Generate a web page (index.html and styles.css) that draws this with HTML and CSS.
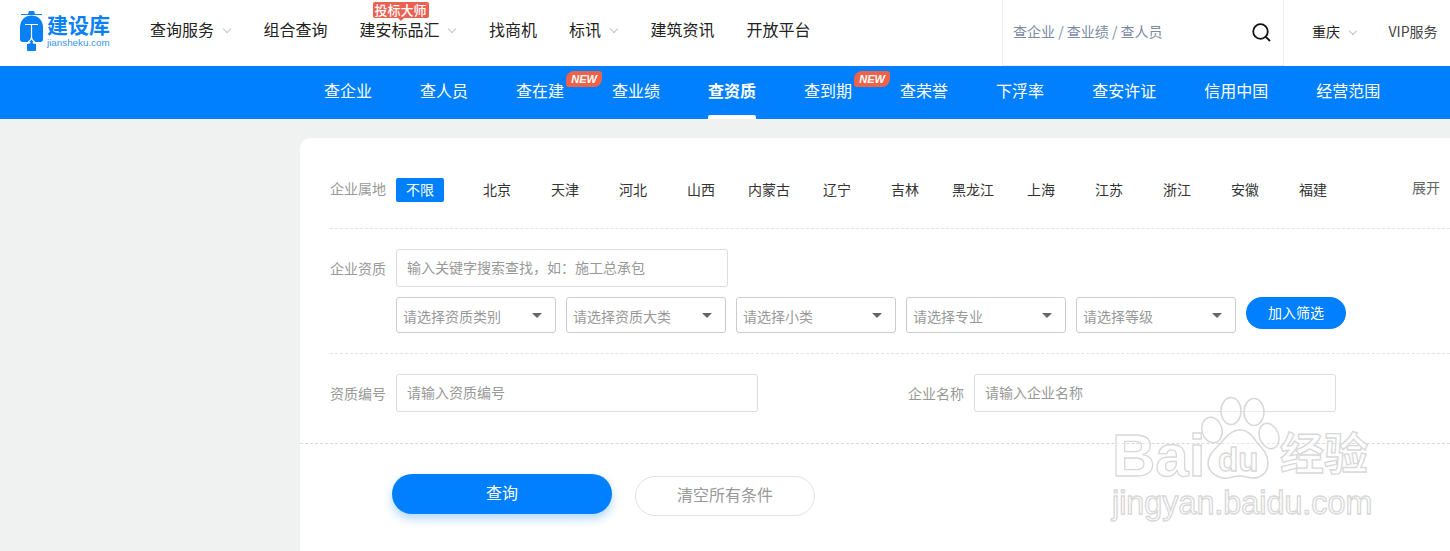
FILE: index.html
```html
<!DOCTYPE html>
<html lang="zh">
<head>
<meta charset="utf-8">
<title>建设库</title>
<link rel="stylesheet" href="styles.css">
</head>
<body>
<header class="topbar">
  <a class="logo">
    <svg class="logo-mark" width="28" height="42" viewBox="0 0 28 42">
      <path class="logo-fill" d="M10 1h5l1 3h-7z"/>
      <path class="logo-line" d="M2 4.500h21"/>
      <path class="logo-fill" d="M12.500 5.500c6.500 0 11 4.500 11.500 11v13c0 1.500-1 2.500-2.500 2.500h-18c-1.500 0-2.500-1-2.500-2.500v-13c.5-6.500 5-11 11.500-11z"/>
      <path class="logo-cut" d="M6 14.500h13M12.500 14.500v12c0 2.500-1.500 4.500-3.500 5.500M12.500 26.500c0 2.500 1.500 4.500 3.500 5.500"/>
      <path class="logo-fill" d="M11.500 32h2l.5 1.500 3 .5v6c0 .7-.5 1-1 1h-7c-.5 0-1-.3-1-1v-6l3-.5z"/>
    </svg>
    <span class="logo-text">
      <span class="logo-name">建设库</span>
      <span class="logo-url">jiansheku.com</span>
    </span>
  </a>
  <nav class="mainnav">
    <a class="mainnav-item">查询服务<i class="chev"></i></a>
    <a class="mainnav-item">组合查询</a>
    <a class="mainnav-item has-tip">建安标品汇<i class="chev"></i><span class="tip">投标大师</span></a>
    <a class="mainnav-item">找商机</a>
    <a class="mainnav-item">标讯<i class="chev"></i></a>
    <a class="mainnav-item">建筑资讯</a>
    <a class="mainnav-item">开放平台</a>
  </nav>
  <div class="topsearch">
    <span class="topsearch-hint">查企业 / 查业绩 / 查人员</span>
    <svg class="topsearch-icon" width="20" height="20" viewBox="0 0 20 20">
      <circle cx="9.500" cy="9.500" r="7.300"/>
      <path d="M14.800 14.800l3.700 3.700"/>
    </svg>
  </div>
  <a class="city">重庆<i class="chev"></i></a>
  <a class="vip">VIP服务</a>
</header>

<nav class="subnav">
  <a class="subnav-item">查企业</a>
  <a class="subnav-item">查人员</a>
  <a class="subnav-item">查在建<span class="new">NEW</span></a>
  <a class="subnav-item">查业绩</a>
  <a class="subnav-item is-active">查资质</a>
  <a class="subnav-item">查到期<span class="new">NEW</span></a>
  <a class="subnav-item">查荣誉</a>
  <a class="subnav-item">下浮率</a>
  <a class="subnav-item">查安许证</a>
  <a class="subnav-item">信用中国</a>
  <a class="subnav-item">经营范围</a>
</nav>

<main class="card">
  <section class="row row-region">
    <span class="label">企业属地</span>
    <a class="chip is-on">不限</a>
    <div class="chips">
      <a class="chip">北京</a>
      <a class="chip">天津</a>
      <a class="chip">河北</a>
      <a class="chip">山西</a>
      <a class="chip">内蒙古</a>
      <a class="chip">辽宁</a>
      <a class="chip">吉林</a>
      <a class="chip">黑龙江</a>
      <a class="chip">上海</a>
      <a class="chip">江苏</a>
      <a class="chip">浙江</a>
      <a class="chip">安徽</a>
      <a class="chip">福建</a>
    </div>
    <a class="expand">展开</a>
  </section>

  <section class="row row-qual">
    <span class="label label-input">企业资质</span>
    <div class="qual-body">
      <div class="field field-key">输入关键字搜索查找，如：施工总承包</div>
      <div class="selects">
        <div class="select">请选择资质类别<i class="caret"></i></div>
        <div class="select">请选择资质大类<i class="caret"></i></div>
        <div class="select">请选择小类<i class="caret"></i></div>
        <div class="select">请选择专业<i class="caret"></i></div>
        <div class="select">请选择等级<i class="caret"></i></div>
        <a class="add-btn">加入筛选</a>
      </div>
    </div>
  </section>

  <section class="row row-code">
    <span class="label label-input">资质编号</span>
    <div class="field field-wide">请输入资质编号</div>
    <span class="label label-input label-name">企业名称</span>
    <div class="field field-wide">请输入企业名称</div>
  </section>

  <footer class="actions">
    <a class="btn-query">查询</a>
    <a class="btn-clear">清空所有条件</a>
  </footer>
</main>

<div class="watermark">
  <svg class="wm-paw" width="132" height="92" viewBox="0 0 132 92">
    <ellipse cx="50" cy="17" rx="10" ry="13.500"/>
    <ellipse cx="73" cy="18" rx="10" ry="13.500"/>
    <ellipse cx="31" cy="36" rx="10" ry="13" transform="rotate(-15 31 36)"/>
    <ellipse cx="88" cy="42" rx="9.500" ry="13" transform="rotate(-20 88 42)"/>
    <path d="M59 36c9 0 13 7 18 14 6 6 10 11 10 19 0 10-8 16-17 15-5-1-7-2-11-2s-7 1-12 2c-9 1-20-5-20-15 0-8 6-13 12-19 6-7 11-14 20-14z"/>
  </svg>
  <span class="wm-bai">Bai</span>
  <span class="wm-du">du</span>
  <span class="wm-cn">经验</span>
  <span class="wm-url">jingyan.baidu.com</span>
</div>
</body>
</html>
```
FILE: styles.css
```css
* { box-sizing: border-box; }

html, body {
  margin: 0;
  height: 551px;
  overflow: hidden;
}

body {
  position: relative;
  background: #f0f2f2;
  font-family: "Noto Sans CJK SC", "Noto Sans", sans-serif;
  color: #333;
}

/* top bar */
.topbar {
  height: 66px;
  background: #fff;
  display: flex;
  align-items: stretch;
}

.logo {
  width: 150px;
  padding: 10px 0 0 19px;
  display: flex;
  align-items: flex-start;
  flex: none;
}

.logo-mark { flex: none; }
.logo-fill { fill: #0a80f5; }
.logo-line { stroke: #0a80f5; stroke-width: 1; fill: none; }
.logo-cut { stroke: #fff; stroke-width: 1.200; fill: none; }

.logo-text {
  display: flex;
  flex-direction: column;
  gap: 2px;
  margin-top: 3px;
}

.logo-name {
  font-size: 21px;
  font-weight: 700;
  line-height: 22px;
  color: #0a80f5;
  white-space: nowrap;
}

.logo-url {
  font-family: "Liberation Sans", sans-serif;
  font-size: 9.800px;
  line-height: 11px;
  color: #3b95ee;
  white-space: nowrap;
}

.mainnav {
  display: flex;
  gap: 32px;
  width: 852px;
  flex: none;
}

.mainnav-item {
  position: relative;
  display: flex;
  align-items: center;
  height: 58px;
  font-size: 16px;
  color: #222;
  white-space: nowrap;
}

.chev {
  width: 6px;
  height: 6px;
  margin: -1px 2px 0 9.500px;
  border-right: 1px solid #c4c4c4;
  border-bottom: 1px solid #c4c4c4;
  transform: rotate(45deg);
  flex: none;
}

.tip {
  position: absolute;
  left: 13px;
  top: 2px;
  width: 56px;
  height: 16px;
  background: #ea6152;
  border-radius: 2px;
  color: #fff;
  font-size: 13px;
  font-weight: 500;
  line-height: 15px;
  text-align: center;
}

.tip::after {
  content: "";
  position: absolute;
  left: 25px;
  top: 16px;
  border: 3px solid transparent;
  border-top-color: #ea6152;
  border-bottom-width: 0;
}

.topsearch {
  width: 282px;
  flex: none;
  display: flex;
  align-items: center;
  justify-content: space-between;
  padding: 0 12px 2px 10px;
  border-left: 1px solid #eee;
  border-right: 1px solid #eee;
  border-bottom: 1px solid #eee;
}

.topsearch-hint {
  font-size: 14px;
  line-height: 20px;
  margin-top: -2px;
  color: #7b8aa5;
  white-space: nowrap;
}

.topsearch-icon { flex: none; }
.topsearch-icon circle,
.topsearch-icon path {
  fill: none;
  stroke: #111;
  stroke-width: 1.800;
  stroke-linecap: round;
}

.city {
  display: flex;
  align-items: center;
  height: 62px;
  margin-left: 28px;
  font-size: 14px;
  color: #222;
  white-space: nowrap;
}

.vip {
  display: flex;
  align-items: center;
  height: 62px;
  margin-left: 31px;
  font-size: 14px;
  color: #444;
  white-space: nowrap;
}

/* blue navigation */
.subnav {
  height: 53px;
  background: #0080ff;
  display: flex;
  gap: 48px;
  padding-left: 324px;
}

.subnav-item {
  position: relative;
  height: 53px;
  line-height: 48px;
  font-size: 16px;
  color: #fff;
  white-space: nowrap;
}

.subnav-item.is-active { font-weight: 700; }

.subnav-item.is-active::after {
  content: "";
  position: absolute;
  left: 0;
  right: 0;
  bottom: 0;
  height: 4px;
  background: #fff;
  border-radius: 2px 2px 0 0;
}

.new {
  position: absolute;
  left: 50px;
  top: 5px;
  width: 36px;
  height: 16px;
  background: #ee6249;
  border-radius: 8px 3px 8px 3px;
  font-family: "Liberation Sans", sans-serif;
  font-size: 11px;
  font-weight: 700;
  font-style: italic;
  line-height: 16px;
  text-align: center;
  color: #fff;
}

/* filter card */
.card {
  width: 1200px;
  height: 440px;
  margin: 19px 0 0 300px;
  background: #fff;
  border-radius: 10px 0 0 0;
}

.row {
  margin-left: 30px;
  display: flex;
  border-bottom: 1px dashed #e4e4e4;
}

.label {
  flex: none;
  width: 66px;
  font-size: 14px;
  line-height: 20px;
  color: #999;
  white-space: nowrap;
}

.label-input { line-height: 38px; }

.row-region {
  height: 91px;
  padding-top: 40px;
}

.chip {
  width: 48px;
  height: 24px;
  margin-right: 20px;
  flex: none;
  font-size: 14px;
  line-height: 22px;
  text-align: center;
  color: #333;
  white-space: nowrap;
}

.chip.is-on {
  margin-right: 29px;
  background: #0080ff;
  border-radius: 2px;
  color: #fff;
}

.chips { display: flex; flex: none; }

.expand {
  margin: -3px 0 0 55px;
  font-size: 14px;
  line-height: 24px;
  color: #666;
  white-space: nowrap;
}

.row-qual {
  height: 125px;
  padding-top: 20px;
}

.qual-body {
  display: flex;
  flex-direction: column;
  gap: 10px;
}

.field {
  height: 38px;
  padding-left: 10px;
  background: #fff;
  border: 1px solid #ddd;
  border-radius: 3px;
  font-size: 14px;
  line-height: 34px;
  color: #999;
  white-space: nowrap;
}

.field-key { width: 332px; }
.field-wide { width: 362px; flex: none; }

.selects {
  display: flex;
  gap: 10px;
  align-items: flex-start;
}

.select {
  position: relative;
  width: 160px;
  height: 36px;
  padding-left: 6px;
  border: 1px solid #ccc;
  border-radius: 3px;
  font-size: 14px;
  line-height: 36px;
  color: #999;
  white-space: nowrap;
}

.caret {
  position: absolute;
  right: 13px;
  top: 15px;
  border-style: solid;
  border-width: 5px 5px 0;
  border-color: #666 transparent transparent;
}

.add-btn {
  width: 100px;
  height: 32px;
  background: #0080ff;
  border-radius: 16px;
  font-size: 14px;
  line-height: 31px;
  text-align: center;
  color: #fff;
}

.row-code {
  height: 90px;
  margin-left: 0;
  padding: 20px 0 0 30px;
  border-bottom-color: #d8d8d8;
}

.label-name { margin-left: 150px; }

.actions {
  display: flex;
  align-items: flex-start;
  padding: 30px 0 0 92px;
}

.btn-query {
  width: 220px;
  height: 40px;
  background: #0080ff;
  border-radius: 20px;
  box-shadow: 0 5px 10px rgba(0, 128, 255, .3);
  font-size: 16px;
  line-height: 36px;
  text-align: center;
  color: #fff;
}

.btn-clear {
  width: 180px;
  height: 40px;
  margin: 2px 0 0 23px;
  border: 1px solid #e2e2e2;
  border-radius: 20px;
  font-size: 16px;
  line-height: 35px;
  text-align: center;
  color: #999;
}

/* baidu watermark */
.watermark {
  position: absolute;
  left: 1100px;
  top: 390px;
  width: 290px;
  height: 140px;
  pointer-events: none;
}

.wm-paw {
  position: absolute;
  left: 81px;
  top: 4px;
}

.wm-paw ellipse,
.wm-paw path {
  fill: rgba(255, 255, 255, .45);
  stroke: #d8d8d8;
  stroke-width: 1.500;
}

.wm-bai,
.wm-du,
.wm-cn,
.wm-url {
  position: absolute;
  color: rgba(255, 255, 255, .6);
  -webkit-text-stroke: 1.300px #d8d8d8;
  white-space: nowrap;
  line-height: 1;
}

.wm-bai {
  left: 12px;
  top: 36px;
  font-family: "Liberation Sans", sans-serif;
  font-weight: 700;
  font-size: 60px;
}

.wm-du {
  left: 118px;
  top: 53px;
  font-family: "Liberation Sans", sans-serif;
  font-weight: 700;
  font-size: 33px;
}

.wm-cn {
  left: 180px;
  top: 39px;
  font-size: 44px;
  font-weight: 700;
}

.wm-url {
  left: 12px;
  top: 97px;
  font-family: "Liberation Sans", sans-serif;
  font-size: 32.300px;
}
```
